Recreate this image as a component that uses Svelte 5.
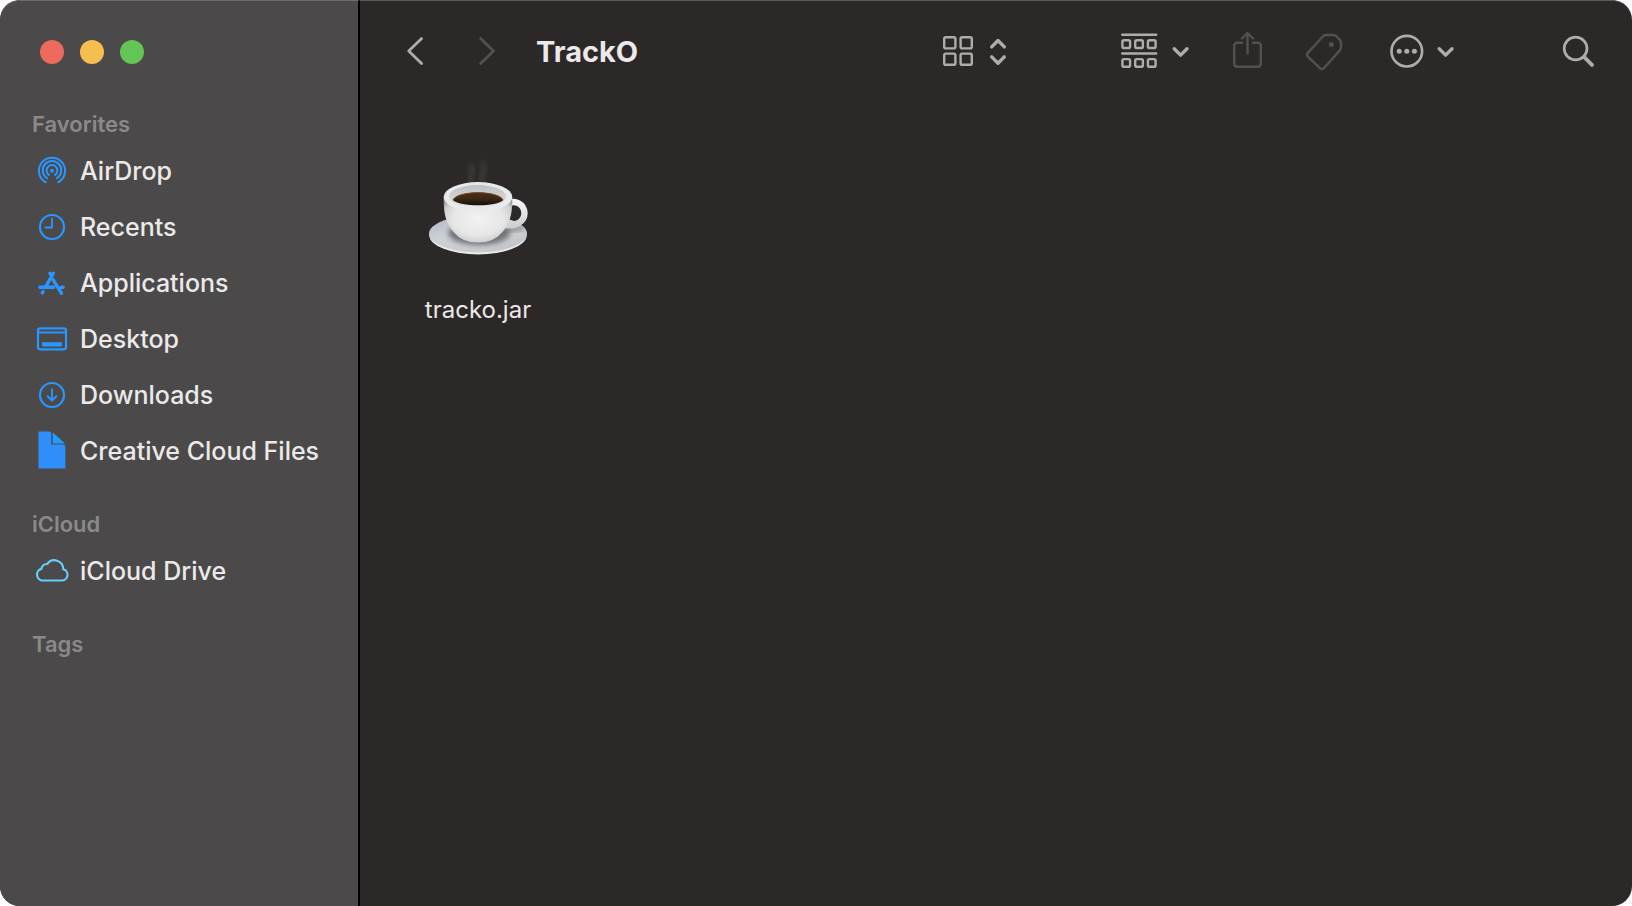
<script>
  const sections = [
    {
      title: 'Favorites',
      items: [
        { name: 'AirDrop', icon: 'airdrop' },
        { name: 'Recents', icon: 'recents' },
        { name: 'Applications', icon: 'apps' },
        { name: 'Desktop', icon: 'desktop' },
        { name: 'Downloads', icon: 'downloads' },
        { name: 'Creative Cloud Files', icon: 'file' }
      ]
    },
    { title: 'iCloud', items: [{ name: 'iCloud Drive', icon: 'cloud' }] },
    { title: 'Tags', items: [] }
  ];
</script>

{#snippet placeIcon(icon)}
  <svg class="place-icon" class:cloud={icon === 'cloud'} viewBox="0 0 36 40" width="36" height="40" aria-hidden="true">
    {#if icon === 'airdrop'}
      <g stroke-width="2">
        <path d="M11.8 31.3a13.1 13.1 0 1 1 12.4 0" />
        <path d="M13 27.2a9.3 9.3 0 1 1 10 0" />
        <path d="M14.9 23.9a5.4 5.4 0 1 1 6.2 0" />
      </g>
      <circle class="solid" cx="18" cy="19.7" r="2" />
    {:else if icon === 'recents'}
      <circle cx="18" cy="20" r="12" />
      <path d="M18 11.5V20.5H11.3" stroke-width="1.8" />
    {:else if icon === 'apps'}
      <g stroke-width="3.4">
        <path d="M19.3 10.2 12.2 23M5.8 24.3H19.6M27.2 24.3H29.2M9 28.7 8.3 29.9M15.9 10.2 16.9 12M19 16.6 27.4 30.2" />
      </g>
    {:else if icon === 'desktop'}
      <rect x="4" y="9.3" width="28" height="21" rx="2.2" />
      <path d="M4 13.5H32" stroke-width="1.8" />
      <rect class="solid" x="8" y="23.2" width="20" height="4.2" rx="0.8" />
    {:else if icon === 'downloads'}
      <circle cx="18" cy="20" r="12" />
      <path d="M18 14.3V25.5M13.6 21.2 18 25.5 22.4 21.2" stroke-width="1.9" />
    {:else if icon === 'file'}
      <path class="page" d="M4.5 .6H15.5Q17.2 .6 17.2 2.6V13.6H29Q31.4 13.6 31.4 16V37.4H4.5Z" />
      <path class="fold" d="M18.6 1.2 31 12.4H18.6Z" />
    {:else}
      <path d="M9 29.5H27.5A5.8 5.8 0 0 0 29.2 18.1A8.8 8.8 0 0 0 13.2 13A5.4 5.4 0 0 0 7.4 17.9A5.9 5.9 0 0 0 9 29.5Z" />
    {/if}
  </svg>
{/snippet}

{#snippet chevron()}
  <svg class="thick" viewBox="0 0 22 40" width="22" height="40" aria-hidden="true">
    <path d="M4.2 16.8 10.6 23.1 17 16.8" />
  </svg>
{/snippet}

<div class="window">
  <aside>
    <div class="lights">
      <button class="close" aria-label="Close"></button>
      <button class="minimize" aria-label="Minimize"></button>
      <button class="zoom" aria-label="Zoom"></button>
    </div>
    <nav aria-label="Locations">
      {#each sections as section}
        <section>
          <h2>{section.title}</h2>
          {#if section.items.length}
            <ul>
              {#each section.items as item}
                <li>
                  <a href="#{item.icon}">{@render placeIcon(item.icon)}<span>{item.name}</span></a>
                </li>
              {/each}
            </ul>
          {/if}
        </section>
      {/each}
    </nav>
  </aside>

  <main>
    <header>
      <div class="history">
        <button aria-label="Back">
          <svg viewBox="0 0 22 40" width="22" height="40"><path stroke-width="2.8" d="M17.6 6.6 4.7 19.1 17.6 31.6" /></svg>
        </button>
        <button aria-label="Forward" disabled>
          <svg viewBox="0 0 22 40" width="22" height="40"><path stroke-width="2.8" d="M4.6 6.6 17.5 19.1 4.6 31.6" /></svg>
        </button>
      </div>
      <h1>TrackO</h1>
      <button class="view" aria-label="View as icons">
        <svg viewBox="0 0 36 40" width="36" height="40">
          <rect x="4.2" y="5.2" width="11.2" height="11.2" rx="1.6" />
          <rect x="20.6" y="5.2" width="11.2" height="11.2" rx="1.6" />
          <rect x="4.2" y="21.6" width="11.2" height="11.2" rx="1.6" />
          <rect x="20.6" y="21.6" width="11.2" height="11.2" rx="1.6" />
        </svg>
        <svg class="thick" viewBox="0 0 24 40" width="24" height="40">
          <path d="M5.7 14.9 12 8.5 18.3 14.9M5.7 24.9 12 31.3 18.3 24.9" />
        </svg>
      </button>
      <div class="actions">
        <button aria-label="Group items">
          <svg viewBox="0 0 40 40" width="40" height="40">
            <path d="M2.2 2.8H36.2M2.2 21.5H36.2" />
            {#each [8.3, 27.1] as y}
              {#each [2.4, 15.2, 27.9] as x}
                <rect {x} {y} width="7.7" height="7.7" rx="1.6" />
              {/each}
            {/each}
          </svg>
          {@render chevron()}
        </button>
        <button aria-label="Share" disabled>
          <svg viewBox="0 0 36 40" width="36" height="40">
            <path d="M12.2 10.8H7.4Q4.2 10.8 4.2 14V31.6Q4.2 34.8 7.4 34.8H27.6Q30.8 34.8 30.8 31.6V14Q30.8 10.8 27.6 10.8H22.8M17.5 21.6V1.2M12 6.5 17.5 1.2 23 6.5" />
          </svg>
        </button>
        <button aria-label="Edit tags" disabled>
          <svg viewBox="0 0 40 40" width="40" height="40">
            <path d="M19.3 4Q20.4 3 22 3H29.3Q31 3 32.2 4.2L35.8 7.8Q37 9 37 10.7V15.6Q37 17.2 35.8 18.4L20.1 36Q18.1 38.2 16 36.2L4 24.9Q2 22.8 4 20.6Z" />
            <circle class="solid" cx="27.3" cy="12.6" r="2.5" />
          </svg>
        </button>
        <button class="more" aria-label="More actions">
          <svg viewBox="0 0 36 40" width="36" height="40">
            <circle cx="17.8" cy="19.2" r="15.3" stroke-width="2.6" />
            <circle class="solid" cx="10.2" cy="19.2" r="2.5" />
            <circle class="solid" cx="17.8" cy="19.2" r="2.5" />
            <circle class="solid" cx="25.4" cy="19.2" r="2.5" />
          </svg>
          {@render chevron()}
        </button>
      </div>
      <button aria-label="Search">
        <svg viewBox="0 0 36 40" width="36" height="40">
          <circle cx="15.6" cy="16.5" r="11.4" stroke-width="2.7" />
          <path d="M24.5 25.4 32 32.9" stroke-width="3.8" />
        </svg>
      </button>
    </header>

    <div class="files">
      <figure>
        <svg class="cup" viewBox="0 0 120 120" width="120" height="120" aria-hidden="true">
          <defs>
            <linearGradient id="saucer" x1="0" y1="0" x2="1" y2="1">
              <stop offset="0" stop-color="#a9b4c4" />
              <stop offset=".35" stop-color="#cdd0d5" />
              <stop offset=".75" stop-color="#c9cbce" />
              <stop offset="1" stop-color="#b4bac3" />
            </linearGradient>
            <radialGradient id="body" cx=".5" cy=".48" r=".62">
              <stop offset="0" stop-color="#f2f2f3" />
              <stop offset=".6" stop-color="#e6e6e7" />
              <stop offset=".84" stop-color="#cecfd1" />
              <stop offset="1" stop-color="#929396" />
            </radialGradient>
            <linearGradient id="inside" x1="0" y1="0" x2="0" y2="1">
              <stop offset="0" stop-color="#bfc2c4" />
              <stop offset=".6" stop-color="#d3d4d6" />
              <stop offset="1" stop-color="#ebebec" />
            </linearGradient>
            <linearGradient id="coffee" x1="0" y1="0" x2="0" y2="1">
              <stop offset="0" stop-color="#4b2c16" />
              <stop offset=".45" stop-color="#3d2b16" />
              <stop offset="1" stop-color="#14100a" />
            </linearGradient>
            <linearGradient id="handle" x1="0" y1="0" x2="0" y2="1">
              <stop offset="0" stop-color="#f4f4f5" />
              <stop offset=".6" stop-color="#dfe0e2" />
              <stop offset="1" stop-color="#cfd0d3" />
            </linearGradient>
            <filter id="soft" x="-100%" y="-60%" width="300%" height="220%"><feGaussianBlur stdDeviation="2.4" /></filter>
            <clipPath id="dish"><ellipse cx="60" cy="90" rx="48" ry="19" /></clipPath>
          </defs>
          <ellipse cx="60" cy="91.4" rx="48.6" ry="19" fill="#e8e9ea" />
          <ellipse cx="60" cy="89.7" rx="49" ry="18.6" fill="url(#saucer)" />
          <g clip-path="url(#dish)">
            <ellipse cx="61" cy="89" rx="31" ry="12" fill="#54575d" opacity=".75" filter="url(#soft)" />
            <path class="shade" d="M87 86Q98 87 106 82" />
          </g>
          <path class="handle" d="M89 60C97 55 106 60 106.5 69C106.5 78 98 82 88 81" />
          <path d="M25.7 53C25.5 67 27 79 36 88.5Q44 98.5 60 98.5Q76 98.5 84 88.5C93 79 94.5 67 94.3 53Z" fill="url(#body)" />
          <ellipse cx="60" cy="53" rx="34.3" ry="15" fill="#e9eaeb" />
          <ellipse cx="59.5" cy="52.5" rx="28.5" ry="11.5" fill="url(#inside)" />
          <path d="M34.7 56C39 46 81 46 85.3 56C79 63 42 63 34.7 56Z" fill="url(#coffee)" />
          <path class="crema" d="M35.2 55.6C40 46.3 80 46.3 84.8 55.6" />
          <path class="steam" d="M55 42C48 34 58 29 53 22" />
          <path class="steam" d="M66 42C58 34 70 29 65 20" />
        </svg>
        <figcaption>tracko.jar</figcaption>
      </figure>
    </div>
  </main>
</div>

<style>
  :global(body) {
    margin: 0;
    background: #fff;
  }

  .window {
    display: grid;
    grid-template-columns: 360px minmax(0, 1fr);
    box-sizing: border-box;
    min-height: 100vh;
    border-radius: 20px;
    overflow: hidden;
    font-family: Inter, "Liberation Sans", sans-serif;
    color: #ebe9e9;
    background: #2c2828;
  }

  aside {
    background: #4b494a;
    border-right: 2px solid #000;
    border-top: 1px solid #6f6d6e;
    border-top-left-radius: 20px;
  }

  main {
    border-top: 1px solid #5c5959;
    border-top-right-radius: 20px;
  }

  button {
    display: flex;
    align-items: center;
    gap: 10px;
    padding: 0;
    border: 0;
    background: none;
    color: #b0acac;
  }

  button:disabled {
    color: #545050;
  }

  svg {
    display: block;
    flex: none;
    fill: none;
    stroke: currentColor;
    stroke-width: 2.4;
    stroke-linecap: round;
    stroke-linejoin: round;
  }

  .thick {
    stroke-width: 3.4;
  }

  .solid {
    fill: currentColor;
    stroke: none;
  }

  .lights {
    display: flex;
    align-items: center;
    gap: 16px;
    height: 102px;
    padding-left: 40px;
  }

  .lights button {
    width: 24px;
    height: 24px;
    border-radius: 50%;
  }

  .close { background: #ed6a5f; }
  .minimize { background: #f5bf4f; }
  .zoom { background: #62c555; }

  nav {
    display: flex;
    flex-direction: column;
    gap: 26px;
    padding: 2px 0 26px;
  }

  h2 {
    margin: 0;
    padding-left: 32px;
    font-size: 22px;
    font-weight: 600;
    line-height: 38px;
    color: #8b898a;
  }

  ul {
    margin: 0;
    padding: 0;
    list-style: none;
  }

  a {
    display: flex;
    align-items: center;
    gap: 10px;
    height: 56px;
    padding-left: 34px;
    font-size: 25px;
    font-weight: 450;
    white-space: nowrap;
    color: inherit;
    text-decoration: none;
  }

  .place-icon {
    color: #2997ff;
    stroke-width: 2.2;
  }

  .cloud {
    color: #62d0fb;
  }

  .page {
    fill: #2e8ffb;
    stroke: none;
  }

  .fold {
    fill: #219bff;
    stroke: none;
  }

  header {
    display: flex;
    align-items: center;
    height: 102px;
    padding: 0 36px 0 44px;
  }

  .history {
    display: flex;
    gap: 50px;
  }

  h1 {
    flex: 1;
    margin: 0;
    padding-left: 38px;
    font-size: 29px;
    font-weight: 700;
    line-height: 36px;
  }

  .view {
    margin-right: 110px;
  }

  .actions {
    display: flex;
    gap: 38px;
    margin-right: 103px;
  }

  .more {
    padding-left: 7px;
  }

  .files {
    display: flex;
    flex-wrap: wrap;
    gap: 40px;
    padding: 41px 58px;
  }

  figure {
    display: flex;
    flex-direction: column;
    align-items: center;
    gap: 30px;
    margin: 0;
  }

  .cup {
    stroke: none;
  }

  .handle {
    stroke: url(#handle);
    stroke-width: 6.4;
  }

  .shade {
    stroke: #646970;
    stroke-width: 4;
    opacity: 0.65;
    filter: url(#soft);
  }

  .crema {
    stroke: #754421;
    stroke-width: 1;
  }

  .steam {
    stroke: #a3adab;
    stroke-width: 5;
    opacity: 0.14;
    filter: url(#soft);
  }

  figcaption {
    font-size: 24px;
    font-weight: 400;
    line-height: 32px;
  }
</style>
